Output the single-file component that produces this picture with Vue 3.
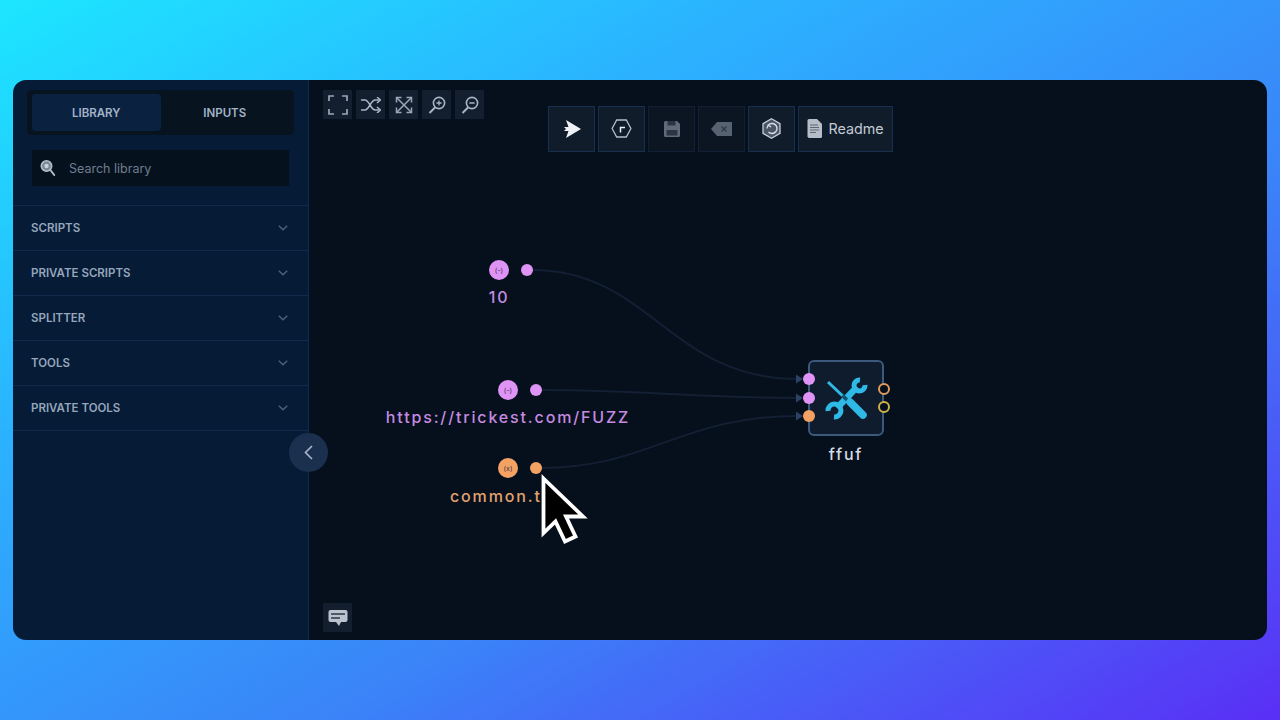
<template>
  <div class="page">
    <div class="window">
      <aside class="sidebar">
        <div class="tabs">
          <div class="tab active">LIBRARY</div>
          <div class="tab">INPUTS</div>
        </div>
        <div class="search">
          <svg class="search-icon" width="16" height="18" viewBox="0 0 16 18">
            <circle cx="6.500" cy="7" r="5.200" fill="#7b8796" stroke="#b4bec9" stroke-width="1.600" />
            <circle cx="6.500" cy="7" r="2.200" fill="#c9d1da" />
            <path d="M10.400 11l3.800 5" stroke="#b4bec9" stroke-width="2" stroke-linecap="round" />
          </svg>
          <span>Search library</span>
        </div>
        <div class="sections">
          <div v-for="s in sections" :key="s" class="section">
            <span>{{ s }}</span>
            <svg width="10" height="6" viewBox="0 0 10 6">
              <path d="M.8.8L5 4.8 9.200.8" fill="none" stroke="#4d607a" stroke-width="1.500" />
            </svg>
          </div>
        </div>
      </aside>

      <main class="canvas">
        <div class="view-tools">
          <button class="mini-btn">
            <svg width="20" height="20" viewBox="0 0 20 20" fill="none" stroke="#9aa7b7" stroke-width="1.700">
              <path d="M1 6V1h5M14 1h5v5M19 14v5h-5M6 19H1v-5" />
            </svg>
          </button>
          <button class="mini-btn">
            <svg width="20" height="16" viewBox="0 0 20 16" fill="none" stroke="#aab5c3" stroke-width="1.500">
              <path d="M0 3h4c4 0 6 10 10 10h4M0 13h4c4 0 6-10 10-10h4" />
              <path d="M16 0l3.400 3L16 6M16 10l3.400 3-3.400 3" />
            </svg>
          </button>
          <button class="mini-btn">
            <svg width="18" height="18" viewBox="0 0 18 18" fill="none" stroke="#9aa7b7" stroke-width="1.500">
              <path d="M2 2l14 14M16 2L2 16" />
              <path d="M1.500 6.500v-5h5M11.500 1.500h5v5M16.500 11.500v5h-5M6.500 16.500h-5v-5" />
            </svg>
          </button>
          <button class="mini-btn">
            <svg width="18" height="18" viewBox="0 0 18 18" fill="none" stroke="#aab5c3" stroke-width="1.600">
              <circle cx="11" cy="7" r="5.600" />
              <path d="M7 11.500L1.500 17" stroke-width="2" />
              <path d="M8.400 7h5.200M11 4.400v5.200" stroke-width="1.300" />
            </svg>
          </button>
          <button class="mini-btn">
            <svg width="18" height="18" viewBox="0 0 18 18" fill="none" stroke="#aab5c3" stroke-width="1.600">
              <circle cx="11" cy="7" r="5.600" />
              <path d="M7 11.500L1.500 17" stroke-width="2" />
              <path d="M8.400 7h5.200" stroke-width="1.300" />
            </svg>
          </button>
        </div>

        <div class="run-tools">
          <button class="run-btn">
            <svg width="18" height="18" viewBox="0 0 18 18">
              <path d="M3 0L18 9 3 18l2.500-7H1l2-2-2-2h4.500z" fill="#eef2f6" />
            </svg>
          </button>
          <button class="run-btn">
            <svg width="21" height="19" viewBox="0 0 21 19" fill="none" stroke="#b4bec9" stroke-width="1.300">
              <path d="M5.700 1h9.600l4.600 8.500-4.600 8.500H5.700L1.100 9.500z" />
              <path d="M9.500 13.500V8.500H14" stroke="#eef2f6" stroke-width="1.500" />
            </svg>
          </button>
          <button class="run-btn off">
            <svg width="18" height="18" viewBox="0 0 18 18">
              <path d="M1 2.500Q1 1 2.500 1H14l3 3v11.500q0 1.500-1.500 1.500h-13Q1 17 1 15.500z" fill="#5f6b79" />
              <path d="M4.500 1h8v4.500h-8zM3.500 10h11v5.500h-11z" fill="#2b3644" />
            </svg>
          </button>
          <button class="run-btn off">
            <svg width="21" height="14" viewBox="0 0 21 14">
              <path d="M6 0h15v14H6L0 7z" fill="#56626f" />
              <path d="M10.500 4.500l5 5M15.500 4.500l-5 5" stroke="#2f3a47" stroke-width="1.300" />
            </svg>
          </button>
          <button class="run-btn">
            <svg width="19" height="21" viewBox="0 0 19 21">
              <path d="M9.500 0.800l8.500 4.900v9.600l-8.500 4.900L1 15.300V5.700z" fill="#4b5666" stroke="#c5ced9" stroke-width="1.300" />
              <path d="M6 7.500A5 5 0 1 1 6.500 14" fill="none" stroke="#d9dfe6" stroke-width="1.400" />
              <path d="M4.800 10.500l1.300-3.200 3 1.600" fill="none" stroke="#d9dfe6" stroke-width="1.200" />
            </svg>
          </button>
          <button class="run-btn readme">
            <svg width="15" height="19" viewBox="0 0 15 19">
              <path d="M2 0h8l5 5v12.500q0 1.500-1.500 1.500h-11Q1 19 .5 17.500V1.500Q.5 0 2 0z" fill="#b4bdc8" />
              <path d="M3 6h8M3 8.500h9M3 11h9M3 13.500h6" stroke="#5c6877" stroke-width="1" />
            </svg>
            <span>Readme</span>
          </button>
        </div>

        <svg class="edges" width="958" height="560" viewBox="309 80 958 560" fill="none">
          <g stroke="#131f33" stroke-width="2">
            <path d="M532 270C650 270 670 379 798 379" />
            <path d="M541 390C640 390 700 398 798 398" />
            <path d="M540 468C650 468 680 416 798 416" />
          </g>
          <g fill="#2c4263">
            <path d="M796 374.500l7 4.500-7 4.500z" />
            <path d="M796 393.500l7 4.500-7 4.500z" />
            <path d="M796 411.500l7 4.500-7 4.500z" />
          </g>
        </svg>

        <div
          v-for="n in inputs"
          :key="n.label"
          class="input-node"
          :class="n.kind"
          :style="{ left: n.x + 'px', top: n.y + 'px' }"
        >
          <div class="pins">
            <span class="badge">{{ n.glyph }}</span>
            <span class="dot"></span>
          </div>
          <div class="node-label">{{ n.label }}</div>
        </div>

        <div class="tool-node">
          <div class="tool-box">
            <svg width="46" height="46" viewBox="0 0 46 46" fill="none">
              <path d="M5 7l19 18" stroke="#2fb9e6" stroke-width="3" />
              <path d="M34 12L14 33" stroke="#2fb9e6" stroke-width="6.500" />
              <path d="M37 5A5.500 5.500 0 1 0 42 10" stroke="#2fb9e6" stroke-width="5" />
              <path d="M11 42A6.500 6.500 0 1 0 5 36" stroke="#2fb9e6" stroke-width="5" />
              <path d="M19.500 20.500l5 5" stroke="#14506f" stroke-width="3.500" />
              <path d="M27 27l13 13" stroke="#2fb9e6" stroke-width="7.500" stroke-linecap="round" />
            </svg>
            <span class="out o1"></span>
            <span class="out o2"></span>
            <span class="in i1"></span>
            <span class="in i2"></span>
            <span class="in i3"></span>
          </div>
          <div class="tool-label">ffuf</div>
        </div>

        <button class="chat-btn">
          <svg width="20" height="18" viewBox="0 0 20 18">
            <path d="M2.500 1h15Q19.500 1 19.500 3v8q0 2-2 2H13l-2 4-3-4H2.500Q.5 13 .5 11V3Q.5 1 2.500 1z" fill="#b9c2cd" />
            <path d="M3 5h14M3 9h9" stroke="#2b3644" stroke-width="1.500" />
          </svg>
        </button>

        <svg class="cursor" width="50" height="74" viewBox="0 0 50 74">
          <path d="M3.500 5.500L43 43.500H26l9.500 20-10.500 5-9.500-20-12 11.500z" fill="#000" stroke="#fff" stroke-width="3.800" />
        </svg>
      </main>

      <button class="collapse">
        <svg width="9" height="15" viewBox="0 0 9 15">
          <path d="M8 1L1.500 7.500 8 14" fill="none" stroke="#a9b8cb" stroke-width="1.600" />
        </svg>
      </button>
    </div>
  </div>
</template>

<script setup>
const sections = ['SCRIPTS', 'PRIVATE SCRIPTS', 'SPLITTER', 'TOOLS', 'PRIVATE TOOLS']

// positions are relative to the canvas, at the centre of the input badge
const inputs = [
  { label: '10', kind: 'purple', glyph: '(-)', x: 190, y: 190 },
  { label: 'https://trickest.com/FUZZ', kind: 'purple', glyph: '(-)', x: 199, y: 310 },
  { label: 'common.txt', kind: 'orange', glyph: '(x)', x: 199, y: 388 }
]
</script>

<style>
body {
  margin: 0;
}
</style>

<style scoped>
.page {
  width: 1280px;
  height: 720px;
  box-sizing: border-box;
  padding: 80px 13px;
  overflow: hidden;
  background: linear-gradient(150deg, #1ce6ff 0%, #2bb2ff 30%, #3a84f8 62%, #5a2ff6 100%);
  font-family: Inter, "Liberation Sans", sans-serif;
}

.window {
  position: relative;
  display: flex;
  height: 560px;
  border-radius: 13px;
  overflow: hidden;
}

.sidebar {
  width: 296px;
  flex-shrink: 0;
  background: #061b36;
  border-right: 1px solid #10294a;
  box-sizing: border-box;
}

.tabs {
  display: flex;
  margin: 10px 14px 0;
  height: 45px;
  padding: 4px 5px;
  box-sizing: border-box;
  background: #07131f;
  border-radius: 4px;
}

.tab {
  width: 129px;
  display: flex;
  align-items: center;
  justify-content: center;
  font-size: 11.500px;
  font-weight: 600;
  color: #a3b3c8;
  border-radius: 4px;
}

.tab.active {
  background: #0a2140;
}

.search {
  display: flex;
  align-items: center;
  gap: 13px;
  margin: 15px 19px 0;
  width: 257px;
  height: 36px;
  padding-left: 8px;
  box-sizing: border-box;
  background: #06111e;
  font-size: 12.500px;
  color: #6f7e90;
}

.sections {
  margin-top: 19px;
  border-top: 1px solid #12294a;
}

.section {
  display: flex;
  align-items: center;
  justify-content: space-between;
  height: 44px;
  padding: 0 20px 0 18px;
  border-bottom: 1px solid #12294a;
  font-size: 11.500px;
  font-weight: 600;
  color: #95a6bc;
}

.canvas {
  position: relative;
  flex: 1;
  background: #05101c;
}

.view-tools {
  position: absolute;
  left: 14px;
  top: 10px;
  display: flex;
  gap: 4px;
}

.mini-btn,
.chat-btn {
  width: 29px;
  height: 29px;
  padding: 0;
  border: 0;
  background: #131f2e;
  display: flex;
  align-items: center;
  justify-content: center;
}

.chat-btn {
  position: absolute;
  left: 14px;
  top: 523px;
}

.run-tools {
  position: absolute;
  left: 239px;
  top: 26px;
  display: flex;
  gap: 3px;
}

.run-btn {
  width: 47px;
  height: 46px;
  padding: 0 0 1px;
  border: 1px solid #17304f;
  background: #111c2b;
  display: flex;
  align-items: center;
  justify-content: center;
  gap: 6px;
  box-sizing: border-box;
  font-family: inherit;
}

.run-btn.off {
  background: #0c1623;
  border-color: #122036;
}

.run-btn.readme {
  width: 95px;
  font-size: 14.300px;
  color: #c3cbd5;
}

.edges {
  position: absolute;
  left: 0;
  top: 0;
}

.input-node {
  position: absolute;
  width: 0;
  height: 0;
}

.pins {
  position: absolute;
  left: -10px;
  top: -10px;
  display: flex;
  align-items: center;
  gap: 12px;
}

.badge {
  width: 20px;
  height: 20px;
  border-radius: 50%;
  display: flex;
  align-items: center;
  justify-content: center;
  font-size: 7px;
  color: #3a2a4a;
  background: var(--node);
}

.dot {
  width: 12px;
  height: 12px;
  border-radius: 50%;
  background: var(--node);
}

.purple {
  --node: #de93f5;
  --label: #c58be0;
}

.orange {
  --node: #f4a263;
  --label: #e2a26f;
}

.node-label {
  position: absolute;
  left: -150px;
  top: 17px;
  width: 300px;
  text-align: center;
  font-size: 16px;
  line-height: 20px;
  font-weight: 500;
  letter-spacing: 1.850px;
  color: var(--label);
  white-space: nowrap;
}

.orange .node-label {
  left: -58px;
  top: 18px;
  text-align: left;
}

.tool-node {
  position: absolute;
  left: 499px;
  top: 280px;
  width: 76px;
}

.tool-box {
  position: relative;
  width: 76px;
  height: 76px;
  box-sizing: border-box;
  border: 2px solid #3b587d;
  border-radius: 6px;
  background: #0e1c2e;
  display: flex;
  align-items: center;
  justify-content: center;
}

.in {
  position: absolute;
  left: -7px;
  width: 12px;
  height: 12px;
  border-radius: 50%;
}

.i1 {
  top: 11px;
  background: #de93f5;
}

.i2 {
  top: 30px;
  background: #de93f5;
}

.i3 {
  top: 48px;
  background: #f4a263;
}

.out {
  position: absolute;
  right: -8px;
  width: 8px;
  height: 8px;
  border-radius: 50%;
  border: 2px solid;
  background: #05101c;
}

.o1 {
  top: 21px;
  border-color: #e09a5c;
}

.o2 {
  top: 39px;
  border-color: #cdb24a;
}

.tool-label {
  margin-top: 8px;
  text-align: center;
  font-size: 16px;
  line-height: 20px;
  font-weight: 500;
  letter-spacing: 1.850px;
  color: #d5dbe3;
}

.cursor {
  position: absolute;
  left: 231px;
  top: 393px;
}

.collapse {
  position: absolute;
  left: 276px;
  top: 353px;
  width: 39px;
  height: 39px;
  padding: 0;
  border: 0;
  border-radius: 50%;
  background: #1b2f4e;
  display: flex;
  align-items: center;
  justify-content: center;
}
</style>
